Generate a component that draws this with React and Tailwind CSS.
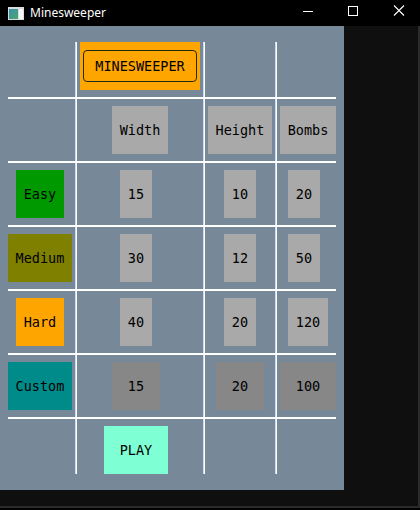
import React from "react";

const mono = { fontFamily: '"DejaVu Sans Mono", "Liberation Mono", monospace' };

const Box = ({ className = "", children }) => (
  <div
    className={`h-[48px] flex items-center justify-center pt-[1px] text-[13.5px] text-black ${className}`}
    style={mono}
  >
    {children}
  </div>
);

const VLine = ({ col }) => (
  <div
    className={`${col} row-span-full w-[2px] bg-[linear-gradient(to_right,#c9d9ef_50%,#fffdf4_50%)]`}
  />
);

const HLine = ({ row }) => <div className={`${row} col-span-full h-[2px] bg-white`} />;

const TitleBar = () => (
  <div className="h-[26px] bg-black flex items-center text-white shrink-0">
    {/* window icon */}
    <svg width="16" height="13" viewBox="0 0 16 13" className="ml-[8px]">
      <rect x="0" y="0" width="16" height="13" fill="#d8dde0" />
      <rect x="1" y="2" width="9" height="10" fill="url(#g)" />
      <rect x="11" y="2" width="4" height="10" fill="#f4f6f7" />
      <defs>
        <linearGradient id="g" x1="0" y1="0" x2="1" y2="1">
          <stop offset="0" stopColor="#3d8fb0" />
          <stop offset="1" stopColor="#4aa86a" />
        </linearGradient>
      </defs>
    </svg>
    <span
      className="ml-[6px] text-[12px] leading-none"
      style={{ fontFamily: '"Noto Sans", "Open Sans", sans-serif' }}
    >
      Minesweeper
    </span>
    <div className="ml-auto flex items-center h-full">
      <svg width="46" height="26" viewBox="0 0 46 26">
        <line x1="18" y1="11.5" x2="28" y2="11.5" stroke="white" strokeWidth="1" />
      </svg>
      <svg width="46" height="26" viewBox="0 0 46 26">
        <rect x="17.5" y="6.5" width="9" height="9" fill="none" stroke="white" strokeWidth="1" />
      </svg>
      <svg width="46" height="26" viewBox="0 0 46 26" className="mr-[-3px]">
        <path d="M17 5.5 L27 15.5 M27 5.5 L17 15.5" stroke="white" strokeWidth="1.1" />
      </svg>
    </div>
  </div>
);

export default function App() {
  return (
    <div className="w-[420px] h-[510px] bg-black flex flex-col overflow-hidden">
      <TitleBar />
      <div className="h-[482px] bg-[#0f0f0f] border-r-2 border-b-2 border-[#2b2b2b]">
        <div className="w-[344px] h-[464px] bg-[#778899] pt-[16px] pl-[8px]">
          <div className="grid grid-cols-[67px_2px_126px_2px_70px_2px_59px] grid-rows-[55px_2px_62px_2px_62px_2px_62px_2px_62px_2px_62px_2px_55px]">
            <VLine col="col-start-2" />
            <VLine col="col-start-4" />
            <VLine col="col-start-6" />
            <HLine row="row-start-2" />
            <HLine row="row-start-4" />
            <HLine row="row-start-6" />
            <HLine row="row-start-8" />
            <HLine row="row-start-10" />
            <HLine row="row-start-12" />

            {/* header */}
            <div className="col-start-3 row-start-1 flex items-start">
              <div className="ml-[3px] w-[120px] h-[48px] bg-[#ffa500] px-[3px] py-[8px] flex">
                <div
                  className="flex-1 border border-[#1f2a10] rounded-[4px] flex items-center justify-center pt-[1px] text-[13.5px] text-black"
                  style={mono}
                >
                  MINESWEEPER
                </div>
              </div>
            </div>

            {/* column labels */}
            <div className="col-start-3 row-start-3 flex items-center">
              <Box className="ml-[35px] w-[56px] bg-[#a9a9a9]">Width</Box>
            </div>
            <div className="col-start-5 row-start-3 flex items-center">
              <Box className="ml-[3px] w-[64px] bg-[#a9a9a9]">Height</Box>
            </div>
            <div className="col-start-7 row-start-3 flex items-center">
              <Box className="ml-[3px] w-[56px] bg-[#a9a9a9]">Bombs</Box>
            </div>

            {/* easy */}
            <div className="col-start-1 row-start-5 flex items-center">
              <Box className="ml-[8px] w-[48px] bg-[#009a00]">Easy</Box>
            </div>
            <div className="col-start-3 row-start-5 flex items-center">
              <Box className="ml-[43px] w-[32px] bg-[#a9a9a9]">15</Box>
            </div>
            <div className="col-start-5 row-start-5 flex items-center">
              <Box className="ml-[19px] w-[32px] bg-[#a9a9a9]">10</Box>
            </div>
            <div className="col-start-7 row-start-5 flex items-center">
              <Box className="ml-[11px] w-[32px] bg-[#a9a9a9]">20</Box>
            </div>

            {/* medium */}
            <div className="col-start-1 row-start-7 flex items-center">
              <Box className="w-[64px] bg-[#808000]">Medium</Box>
            </div>
            <div className="col-start-3 row-start-7 flex items-center">
              <Box className="ml-[43px] w-[32px] bg-[#a9a9a9]">30</Box>
            </div>
            <div className="col-start-5 row-start-7 flex items-center">
              <Box className="ml-[19px] w-[32px] bg-[#a9a9a9]">12</Box>
            </div>
            <div className="col-start-7 row-start-7 flex items-center">
              <Box className="ml-[11px] w-[32px] bg-[#a9a9a9]">50</Box>
            </div>

            {/* hard */}
            <div className="col-start-1 row-start-9 flex items-center">
              <Box className="ml-[8px] w-[48px] bg-[#ffa500]">Hard</Box>
            </div>
            <div className="col-start-3 row-start-9 flex items-center">
              <Box className="ml-[43px] w-[32px] bg-[#a9a9a9]">40</Box>
            </div>
            <div className="col-start-5 row-start-9 flex items-center">
              <Box className="ml-[19px] w-[32px] bg-[#a9a9a9]">20</Box>
            </div>
            <div className="col-start-7 row-start-9 flex items-center">
              <Box className="ml-[11px] w-[40px] bg-[#a9a9a9]">120</Box>
            </div>

            {/* custom */}
            <div className="col-start-1 row-start-11 flex items-center">
              <Box className="w-[64px] bg-[#008b8b]">Custom</Box>
            </div>
            <div className="col-start-3 row-start-11 flex items-center">
              <Box className="ml-[35px] w-[48px] bg-[#878787]">15</Box>
            </div>
            <div className="col-start-5 row-start-11 flex items-center">
              <Box className="ml-[11px] w-[48px] bg-[#878787]">20</Box>
            </div>
            <div className="col-start-7 row-start-11 flex items-center">
              <Box className="ml-[3px] w-[56px] bg-[#878787]">100</Box>
            </div>

            {/* play */}
            <div className="col-start-3 row-start-13 flex items-end">
              <Box className="ml-[27px] w-[64px] bg-[#7fffd4]">PLAY</Box>
            </div>
          </div>
        </div>
      </div>
    </div>
  );
}
